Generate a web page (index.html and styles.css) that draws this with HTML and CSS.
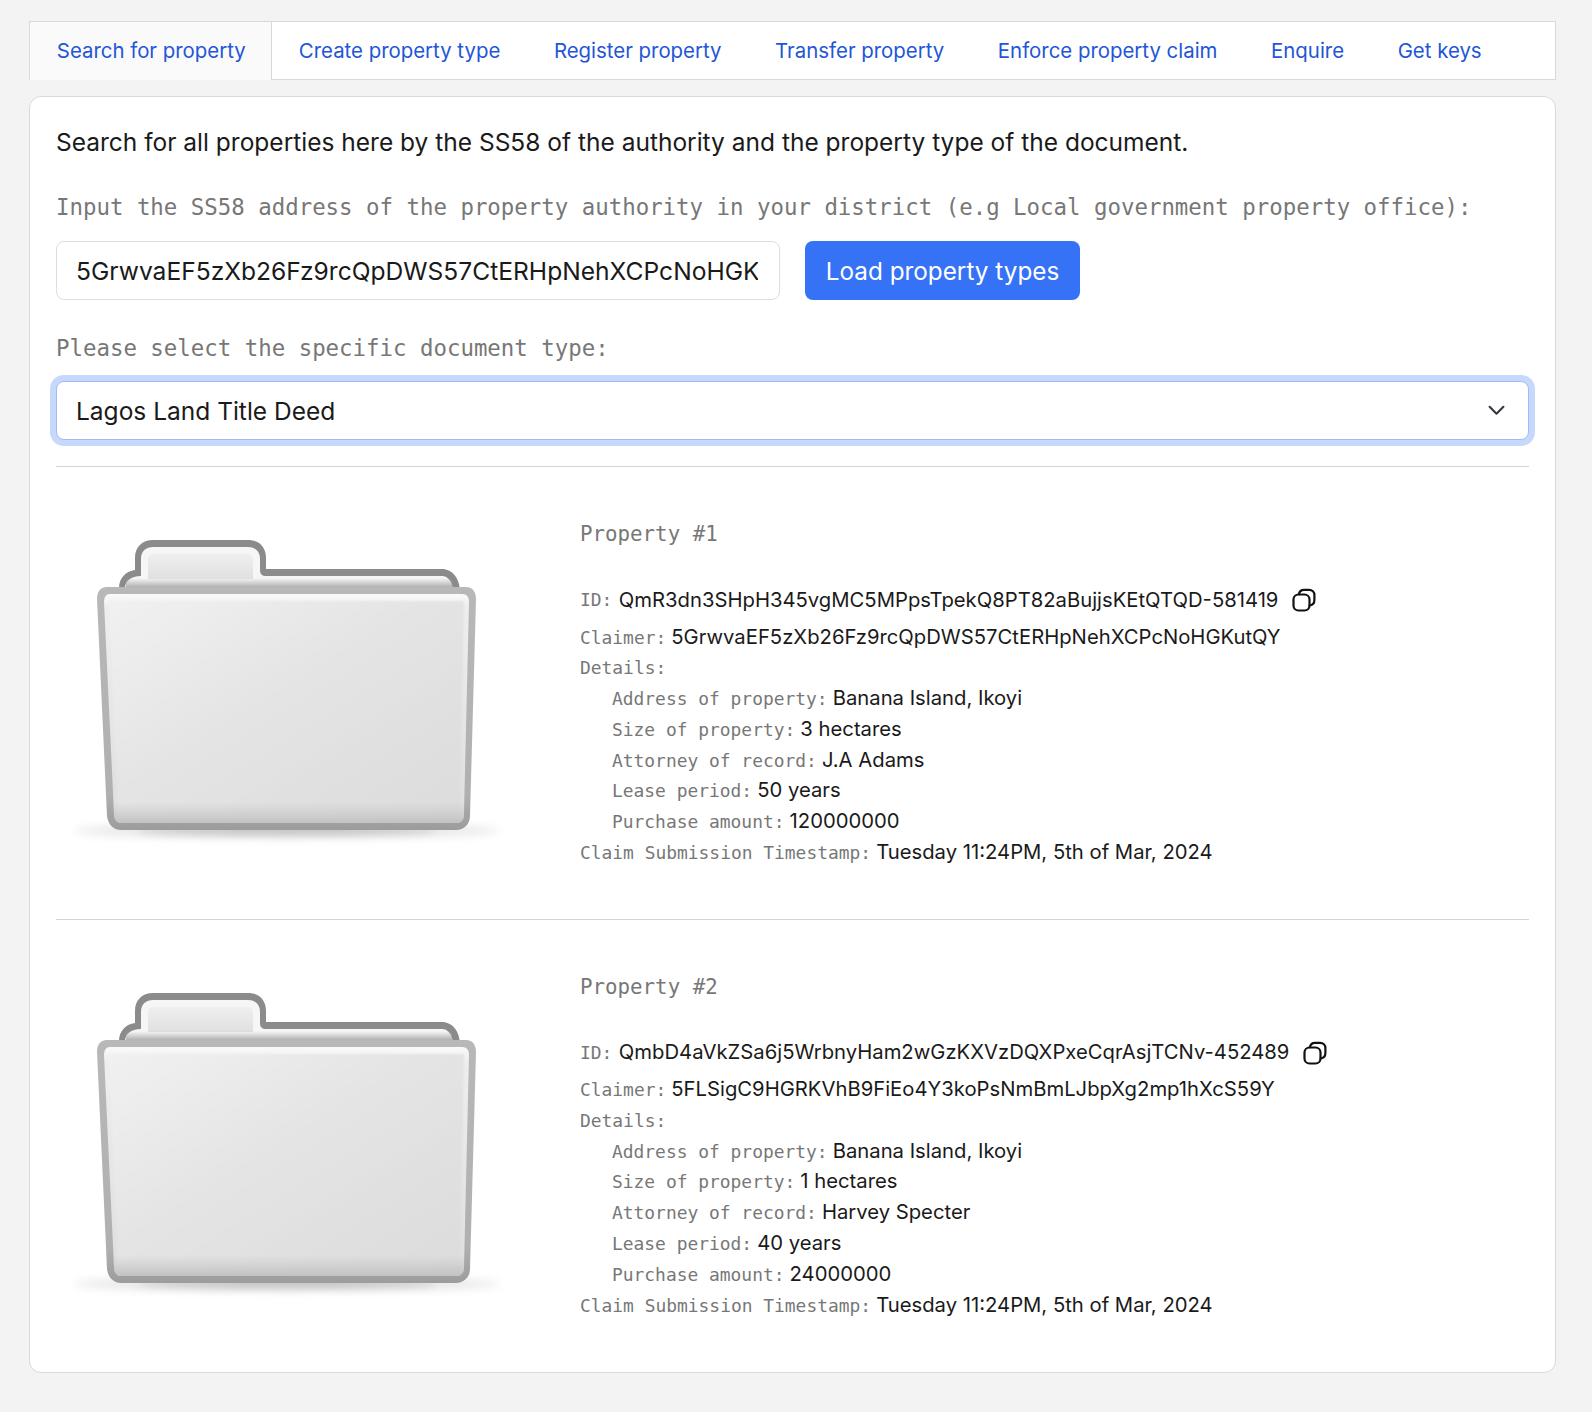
FILE: index.html
```html
<!DOCTYPE html>
<html lang="en">
<head>
<meta charset="utf-8">
<title>Property search</title>
<link rel="stylesheet" href="styles.css">
</head>
<body>
<svg class="defs" aria-hidden="true">
  <defs>
    <linearGradient id="frontFill" x1="0" y1="0" x2="1" y2="1">
      <stop offset="0" stop-color="#f1f1f1"/>
      <stop offset=".45" stop-color="#e4e4e4"/>
      <stop offset="1" stop-color="#dcdcdc"/>
    </linearGradient>
    <linearGradient id="frontBottom" x1="0" y1="0" x2="0" y2="1">
      <stop offset="0" stop-color="#c8c8c8" stop-opacity="0"/>
      <stop offset="1" stop-color="#c2c2c2"/>
    </linearGradient>
    <linearGradient id="frontEdge" x1="0" y1="0" x2="0" y2="1">
      <stop offset="0" stop-color="#b8b8b8"/>
      <stop offset=".85" stop-color="#b0b0b0"/>
      <stop offset="1" stop-color="#9c9c9c"/>
    </linearGradient>
    <linearGradient id="frontRim" x1="0" y1="0" x2="0" y2="1">
      <stop offset="0" stop-color="#fafafa"/>
      <stop offset=".06" stop-color="#eeeeee"/>
      <stop offset="1" stop-color="#dedede"/>
    </linearGradient>
    <linearGradient id="tabFill" x1="0" y1="0" x2="0" y2="1">
      <stop offset="0" stop-color="#efefef"/>
      <stop offset="1" stop-color="#e0e0e0"/>
    </linearGradient>
    <linearGradient id="backShade" x1="0" y1="0" x2="0" y2="1">
      <stop offset="0" stop-color="#b0b0b0" stop-opacity="0"/>
      <stop offset="1" stop-color="#a8a8a8"/>
    </linearGradient>
    <filter id="blurWide" x="-20%" y="-300%" width="140%" height="700%">
      <feGaussianBlur stdDeviation="5"/>
    </filter>
    <filter id="blurSoft" x="-5%" y="-20%" width="110%" height="140%">
      <feGaussianBlur stdDeviation="1"/>
    </filter>
    <symbol id="folder" viewBox="6 0 480 350">
      <ellipse cx="237" cy="321" rx="214" ry="7" fill="#000" opacity=".1" filter="url(#blurWide)"/>
      <ellipse cx="237" cy="320" rx="150" ry="4" fill="#000" opacity=".2" filter="url(#blurWide)"/>
      <path d="M69 82V78C69 68 76 61 85 60V48C85 37 92 30 103 30H198C209 30 216 37 216 48V59H392C402 59 410 68 410 82Z" fill="#8b8b8b"/>
      <path d="M75 82V78C75 71 81 66 91 66V49C91 41 96 37 103 37H198C205 37 210 41 210 49V60C210 64 212 66 216 66H392C398 66 403 72 403 82Z" fill="#f6f6f6"/>
      <path d="M98 69V50C98 46 100 44 104 44H197C201 44 203 46 203 50V69Z" fill="url(#tabFill)"/>
      <rect x="76" y="68" width="326" height="10" fill="url(#backShade)"/>
      <path d="M57 77H416C423 77 426 82 426 89L420 306C420 314 414 320 406 320H71C63 320 58 314 57 306L47 89C47 82 50 77 57 77Z" fill="url(#frontEdge)"/>
      <path d="M60 84H412C417 84 419 87 419 92L414 304C414 310 411 313 406 313H72C67 313 64 310 64 304L54 92C54 87 56 84 60 84Z" fill="url(#frontRim)"/>
      <path d="M59 91H414L410 311H68Z" fill="url(#frontFill)" filter="url(#blurSoft)"/>
      <path d="M63 292H414L414 304C414 310 411 313 406 313H72C67 313 64 310 64 304Z" fill="url(#frontBottom)"/>
    </symbol>
    <symbol id="copy" viewBox="0 0 24 24">
      <rect x="1.5" y="6.5" width="16" height="16" rx="5" fill="none" stroke="#111" stroke-width="2.2"/>
      <path d="M6.8 6.2C7.4 3.4 9.4 1.8 12 1.8H17C20.2 1.8 22.4 4 22.4 7V12C22.4 15 20.6 17 17.7 17.5" fill="none" stroke="#111" stroke-width="2.2" stroke-linecap="round"/>
    </symbol>
  </defs>
</svg>

<nav class="tabs">
  <a class="tab tab-active" href="#">Search for property</a>
  <a class="tab" href="#">Create property type</a>
  <a class="tab" href="#">Register property</a>
  <a class="tab" href="#">Transfer property</a>
  <a class="tab" href="#">Enforce property claim</a>
  <a class="tab" href="#">Enquire</a>
  <a class="tab" href="#">Get keys</a>
</nav>

<main class="card">
  <p class="intro">Search for all properties here by the SS58 of the authority and the property type of the document.</p>
  <label class="field-label" for="authority">Input the SS58 address of the property authority in your district (e.g Local government property office):</label>
  <div class="load-row">
    <input id="authority" class="control address" type="text" value="5GrwvaEF5zXb26Fz9rcQpDWS57CtERHpNehXCPcNoHGKutQY">
    <button class="load-btn" type="button">Load property types</button>
  </div>
  <label class="field-label" for="doctype">Please select the specific document type:</label>
  <div class="select-wrap">
    <select id="doctype" class="control doc-select">
      <option>Lagos Land Title Deed</option>
    </select>
    <svg class="chevron" viewBox="0 0 16 16" aria-hidden="true"><path d="M1.5 4.5 8 11l6.5-6.5" fill="none" stroke="#343a40" stroke-width="2" stroke-linecap="round" stroke-linejoin="round"/></svg>
  </div>

  <section class="property">
    <svg class="folder" aria-hidden="true"><use href="#folder"/></svg>
    <div class="info">
      <h2 class="prop-title">Property #1</h2>
      <div class="line line-id"><span class="key">ID:</span> <span class="val">QmR3dn3SHpH345vgMC5MPpsTpekQ8PT82aBujjsKEtQTQD-581419</span><svg class="copy" aria-hidden="true"><use href="#copy"/></svg></div>
      <div class="line"><span class="key">Claimer:</span> <span class="val">5GrwvaEF5zXb26Fz9rcQpDWS57CtERHpNehXCPcNoHGKutQY</span></div>
      <div class="line"><span class="key">Details:</span></div>
      <div class="details">
        <div class="line"><span class="key">Address of property:</span> <span class="val">Banana Island, Ikoyi</span></div>
        <div class="line"><span class="key">Size of property:</span> <span class="val">3 hectares</span></div>
        <div class="line"><span class="key">Attorney of record:</span> <span class="val">J.A Adams</span></div>
        <div class="line"><span class="key">Lease period:</span> <span class="val">50 years</span></div>
        <div class="line"><span class="key">Purchase amount:</span> <span class="val">120000000</span></div>
      </div>
      <div class="line"><span class="key">Claim Submission Timestamp:</span> <span class="val">Tuesday 11:24PM, 5th of Mar, 2024</span></div>
    </div>
  </section>

  <section class="property">
    <svg class="folder" aria-hidden="true"><use href="#folder"/></svg>
    <div class="info">
      <h2 class="prop-title">Property #2</h2>
      <div class="line line-id"><span class="key">ID:</span> <span class="val">QmbD4aVkZSa6j5WrbnyHam2wGzKXVzDQXPxeCqrAsjTCNv-452489</span><svg class="copy" aria-hidden="true"><use href="#copy"/></svg></div>
      <div class="line"><span class="key">Claimer:</span> <span class="val">5FLSigC9HGRKVhB9FiEo4Y3koPsNmBmLJbpXg2mp1hXcS59Y</span></div>
      <div class="line"><span class="key">Details:</span></div>
      <div class="details">
        <div class="line"><span class="key">Address of property:</span> <span class="val">Banana Island, Ikoyi</span></div>
        <div class="line"><span class="key">Size of property:</span> <span class="val">1 hectares</span></div>
        <div class="line"><span class="key">Attorney of record:</span> <span class="val">Harvey Specter</span></div>
        <div class="line"><span class="key">Lease period:</span> <span class="val">40 years</span></div>
        <div class="line"><span class="key">Purchase amount:</span> <span class="val">24000000</span></div>
      </div>
      <div class="line"><span class="key">Claim Submission Timestamp:</span> <span class="val">Tuesday 11:24PM, 5th of Mar, 2024</span></div>
    </div>
  </section>
</main>
</body>
</html>
```
FILE: styles.css
```css
* { box-sizing: border-box; }

html, body { margin: 0; padding: 0; }

body {
  background: #f3f3f3;
  font-family: Inter, "Liberation Sans", sans-serif;
  color: #1a1a1a;
  padding: 21px 36px 39px 29px;
}

.defs { display: block; width: 0; height: 0; }

.tabs {
  display: flex;
  height: 59px;
  background: #fff;
  border: 1px solid #d9d9d9;
}

.tab {
  display: flex;
  align-items: center;
  padding: 0 26.8px;
  font-size: 20.4px;
  color: #2356d6;
  text-decoration: none;
}

.tab-active {
  background: #fafafa;
  margin-bottom: -1px;
  padding-right: 25.3px;
  padding-bottom: 1px;
  border-right: 1px solid #d9d9d9;
}

.card {
  margin-top: 16px;
  background: #fff;
  border: 1px solid #d9d9d9;
  border-radius: 12px;
  padding: 26px 26px 0;
}

.intro {
  margin: 0 0 30px;
  font-size: 24.5px;
  line-height: 38px;
}

.field-label {
  display: block;
  font-family: "DejaVu Sans Mono", monospace;
  font-size: 22.4px;
  line-height: 32px;
  color: #777;
}

.load-row {
  display: flex;
  gap: 25px;
  margin: 18px 0 31.5px;
}

.control {
  height: 59px;
  background: #fff;
  border: 1px solid #dedede;
  border-radius: 8px;
  font-family: Inter, "Liberation Sans", sans-serif;
  font-size: 24.5px;
  color: #1a1a1a;
  outline: none;
}

.address {
  width: 724px;
  padding: 1px 21px 0 19px;
  font-size: 24.6px;
}

.load-btn {
  height: 59px;
  width: 275px;
  padding: 1px 0 0;
  border: 0;
  border-radius: 8px;
  background: #3572f6;
  color: #fff;
  font-family: Inter, "Liberation Sans", sans-serif;
  font-size: 24.3px;
}

.select-wrap {
  position: relative;
  margin-top: 17.5px;
}

.doc-select {
  display: block;
  width: 100%;
  padding: 0 19px;
  appearance: none;
  border-color: #9ebcf8;
  box-shadow: 0 0 0 6px #c6d8fb;
}

.chevron {
  position: absolute;
  right: 24px;
  top: 21px;
  width: 17px;
  height: 17px;
}

.property {
  display: grid;
  grid-template-columns: 524px 1fr;
  height: 452.5px;
  border-top: 1px solid #d4d4d4;
  padding-top: 43px;
}

.property:last-child { height: 453px; }

.select-wrap + .property { margin-top: 26px; }

.folder {
  display: block;
  width: 480px;
  height: 350px;
}

.info { padding-top: 6px; }

.prop-title {
  margin: 0 0 25.5px;
  font-family: "DejaVu Sans Mono", monospace;
  font-size: 20.8px;
  font-weight: 400;
  line-height: 36px;
  color: #777;
}

.line {
  font-size: 17.92px;
  line-height: 30.8px;
  white-space: nowrap;
}

.line-id {
  display: flex;
  align-items: center;
  height: 45px;
}

.line-id .val { margin-left: 6.5px; }

.details { padding-left: 32px; }

.key {
  font-family: "DejaVu Sans Mono", monospace;
  font-size: 17.92px;
  line-height: 1;
  color: #777;
}

.val {
  font-size: 20.25px;
  line-height: 1;
  color: #1a1a1a;
}

.copy {
  display: block;
  width: 24px;
  height: 24px;
  margin-left: 14px;
}
```
